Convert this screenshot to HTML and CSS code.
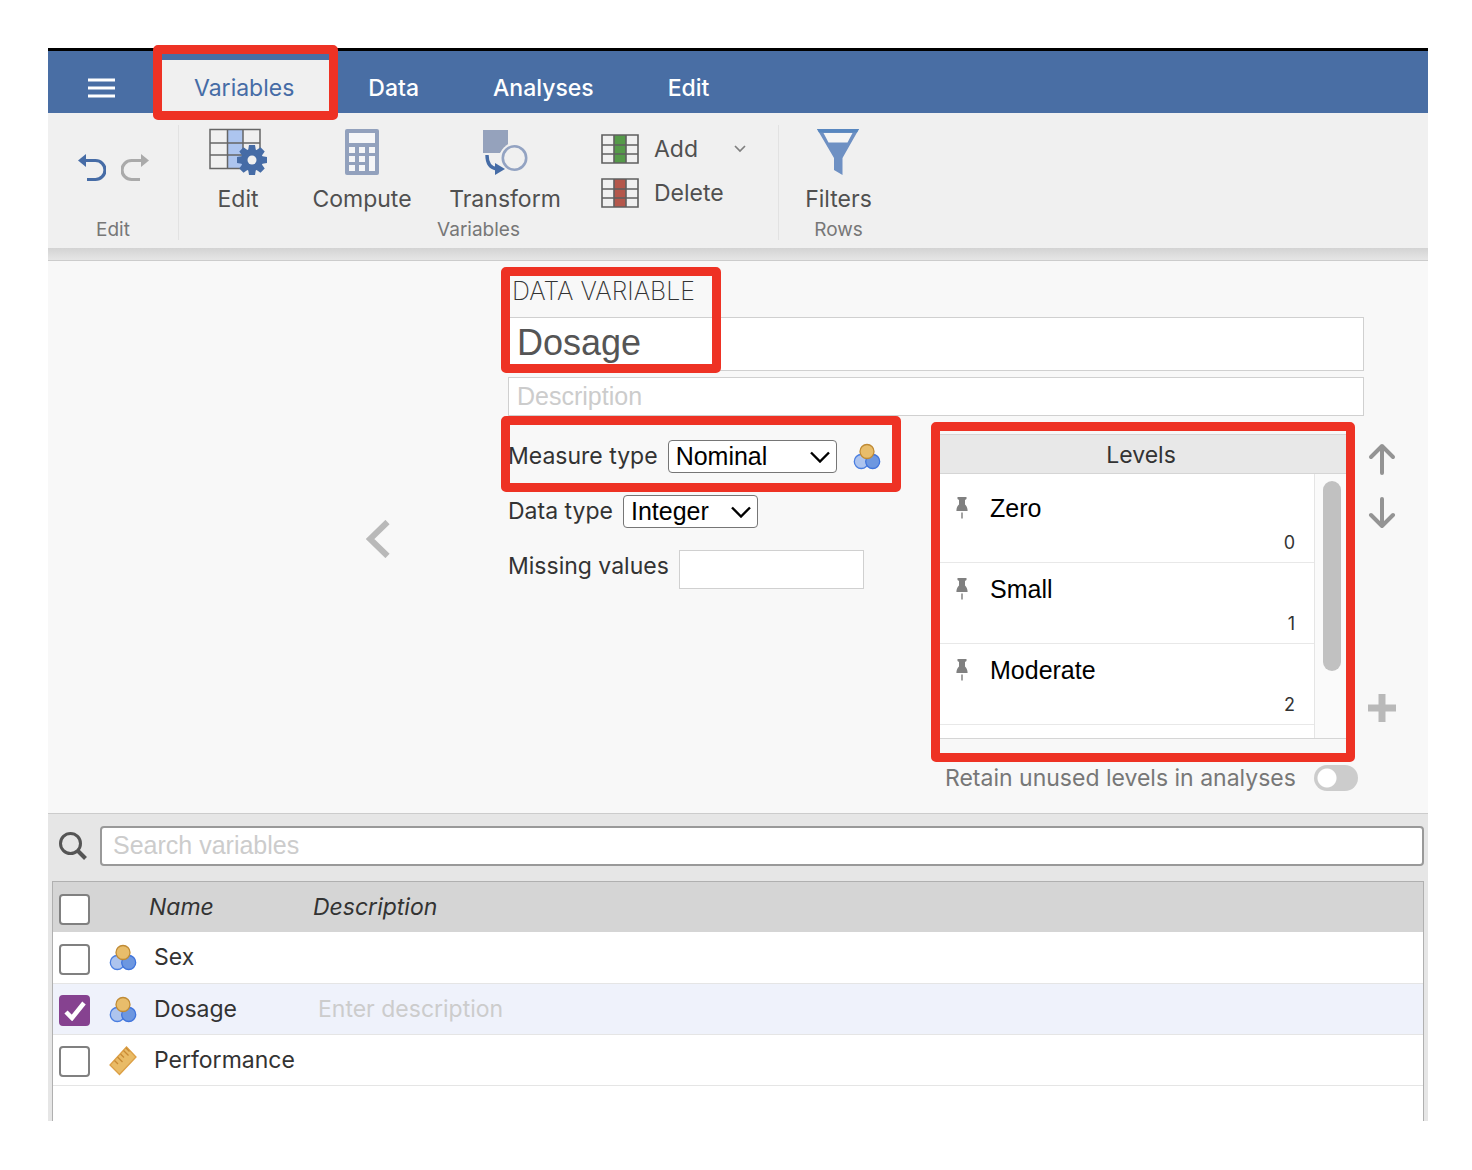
FILE: index.html
```html
<!DOCTYPE html>
<html lang="en">
<head>
<meta charset="utf-8">
<title>Variables - Dosage</title>
<link rel="stylesheet" href="styles.css">
</head>
<body>
<svg class="defs" aria-hidden="true">
  <symbol id="nominal" viewBox="0 0 28 28">
    <circle cx="8.300" cy="18.500" r="7" fill="#adc4ee" stroke="#4a7ee0" stroke-width="1.300"/>
    <circle cx="19.700" cy="18.500" r="7" fill="#6d97e0" stroke="#3f74dc" stroke-width="1.300"/>
    <circle cx="14" cy="8.500" r="7" fill="#e8bd6b" stroke="#c08b35" stroke-width="1.300"/>
  </symbol>
  <symbol id="pin" viewBox="0 0 12 22">
    <path d="M1.500 0h9v2l-1.500 1v4.500c1.600 1.500 2.600 3.500 2.600 6.500H.4c0-3 1-5 2.600-6.500V3L1.500 2z" fill="#808080"/>
    <path d="M6 15.500v6" stroke="#8c8c8c" stroke-width="1.600"/>
  </symbol>
  <symbol id="chevron" viewBox="0 0 20 12">
    <path d="M1 1.500l9 9 9-9" fill="none" stroke="#000" stroke-width="2.400"/>
  </symbol>
</svg>
<div class="app">
  <nav class="tabs">
    <button class="menu" aria-label="Menu"><svg width="27" height="20"><path d="M0 2h27M0 10h27M0 18h27" stroke="#fff" stroke-width="3"/></svg></button>
    <div class="tab-slot"><button class="tab active">Variables</button><span class="mark mark-tab"></span></div>
    <button class="tab">Data</button>
    <button class="tab">Analyses</button>
    <button class="tab">Edit</button>
  </nav>

  <div class="toolbar">
    <section class="group history">
      <div class="tools">
        <button class="tool" aria-label="Undo"><svg width="28" height="28"><path d="M6 6.500H17.500a8.300 8.300 0 0 1 0 19H9" fill="none" stroke="#466ca6" stroke-width="3.200"/><path d="M0 6.500L8 0v13z" fill="#466ca6"/></svg></button>
        <button class="tool" aria-label="Redo"><svg width="28" height="28"><path d="M22 6.500H10.500a8.300 8.300 0 0 0 0 19H19" fill="none" stroke="#aaa" stroke-width="3.200"/><path d="M28 6.500L20 0v13z" fill="#aaa"/></svg></button>
      </div>
      <div class="group-label">Edit</div>
    </section>
    <section class="group variables">
      <div class="tools">
        <button class="tool big">
          <svg width="58" height="48" viewBox="0 0 58 48"><path d="M19 2.500h15v39H19z" fill="#adc5ef"/><path d="M1 2.500h50v39H1zM1 16h50M1 28h50M18.500 2v40M34 2v40" fill="none" stroke="#666" stroke-width="1.500"/><g transform="translate(43 33)"><g fill="#466ca6"><circle r="11"/><path d="M-3-15h6l1 6h-8zM-3 15h6l1-6h-8zM-15-3v6l6 1v-8zM15-3v6l-6 1v-8z"/><path d="M-3-15h6l1 6h-8zM-3 15h6l1-6h-8zM-15-3v6l6 1v-8zM15-3v6l-6 1v-8z" transform="rotate(45)"/></g><circle r="4.500" fill="#f0f0f0"/></g></svg>
          Edit</button>
        <button class="tool big">
          <svg width="36" height="48" viewBox="0 0 36 48"><rect x="1" y="2" width="34" height="46" rx="2" fill="#92a1bd"/><path d="M5 6h26v10H5zM5 20h6v6H5zM15 20h6v6h-6zM25 20h6v6h-6zM5 29h6v6H5zM15 29h6v6h-6zM5 38h6v6H5zM15 38h6v6h-6zM25 29h6v15h-6z" fill="#f5f6f8"/></svg>
          Compute</button>
        <button class="tool big">
          <svg width="46" height="48" viewBox="0 0 46 48"><path d="M1 3h25v14l-8 9H1z" fill="#95a2bc"/><circle cx="32.500" cy="31" r="15" fill="#f0f0f0"/><circle cx="32.500" cy="31" r="11.700" fill="none" stroke="#93a3c2" stroke-width="2.600"/><path d="M5 28c0 8 3 13 10 14" fill="none" stroke="#466ca6" stroke-width="3.400"/><path d="M13 36l10 6-10 6z" fill="#466ca6"/></svg>
          Transform</button>
        <div class="small-tools">
          <button class="tool small"><svg width="38" height="30" viewBox="0 0 38 30"><path d="M13 1h12v28H13z" fill="#559a49"/><path d="M1 1h36v28H1zM1 11h36M1 20h36M13 1v28M25 1v28" fill="none" stroke="#5f5f5f" stroke-width="1.600"/></svg><span>Add</span><svg class="caret" width="12" height="8"><path d="M1 1l5 5 5-5" fill="none" stroke="#808080" stroke-width="1.700"/></svg></button>
          <button class="tool small"><svg width="38" height="30" viewBox="0 0 38 30"><path d="M13 1h12v28H13z" fill="#b4574b"/><path d="M1 1h36v28H1zM1 11h36M1 20h36M13 1v28M25 1v28" fill="none" stroke="#5f5f5f" stroke-width="1.600"/></svg><span>Delete</span></button>
        </div>
      </div>
      <div class="group-label">Variables</div>
    </section>
    <section class="group rows">
      <div class="tools">
        <button class="tool big"><svg width="42" height="48" viewBox="0 0 42 48"><path d="M0 2h42L25.500 31v17L17 43V31z" fill="#6e90c3"/><path d="M0 2h42l-2 3.500H2z" fill="#5887c0"/><path d="M6.500 6h29l-5 9.500h-19z" fill="#f5f5f5"/></svg>Filters</button>
      </div>
      <div class="group-label">Rows</div>
    </section>
  </div>
  <div class="divider"></div>

  <main class="editor">
    <button class="previous" aria-label="Previous variable"><svg width="24" height="38"><path d="M21.500 2L4 19l17.500 17" fill="none" stroke="#b9b9b9" stroke-width="6"/></svg></button>
    <div class="details">
      <div class="title-block">
        <h1 class="kind">DATA VARIABLE</h1>
        <input class="name-input" value="Dosage" aria-label="Variable name">
        <span class="mark mark-title"></span>
      </div>
      <input class="description-input" placeholder="Description" aria-label="Description">
      <div class="settings">
        <form class="types">
          <div class="field">
            <label for="measure">Measure type</label>
            <span class="pick pick-measure"><select id="measure"><option>Nominal</option></select><svg width="20" height="12"><use href="#chevron"/></svg></span>
            <svg class="type-icon" width="28" height="28"><use href="#nominal"/></svg>
            <span class="mark mark-measure"></span>
          </div>
          <div class="field">
            <label for="datatype">Data type</label>
            <span class="pick pick-data"><select id="datatype"><option>Integer</option></select><svg width="20" height="12"><use href="#chevron"/></svg></span>
          </div>
          <div class="field">
            <label for="missing">Missing values</label>
            <input class="missing-input" id="missing">
          </div>
        </form>
        <div class="levels-column">
          <section class="levels">
            <h2 class="levels-title">Levels</h2>
            <div class="levels-body">
              <ul class="level-list">
                <li class="level"><svg width="12" height="22"><use href="#pin"/></svg><span class="level-name">Zero</span><span class="level-value">0</span></li>
                <li class="level"><svg width="12" height="22"><use href="#pin"/></svg><span class="level-name">Small</span><span class="level-value">1</span></li>
                <li class="level"><svg width="12" height="22"><use href="#pin"/></svg><span class="level-name">Moderate</span><span class="level-value">2</span></li>
              </ul>
              <div class="scrollbar"><div class="thumb"></div></div>
            </div>
            <span class="mark mark-levels"></span>
          </section>
          <label class="retain">Retain unused levels in analyses<input type="checkbox" class="toggle"></label>
        </div>
        <div class="level-actions">
          <button aria-label="Move up"><svg width="28" height="32"><path d="M14 30V3M3 14L14 3l11 11" fill="none" stroke="#949494" stroke-width="4" stroke-linecap="round" stroke-linejoin="round"/></svg></button>
          <button aria-label="Move down"><svg width="28" height="32"><path d="M14 2v27M3 18l11 11 11-11" fill="none" stroke="#949494" stroke-width="4" stroke-linecap="round" stroke-linejoin="round"/></svg></button>
          <button class="add-level" aria-label="Add level"><svg width="28" height="28"><path d="M14 0v28M0 14h28" stroke="#b9b9b9" stroke-width="7"/></svg></button>
        </div>
      </div>
    </div>
  </main>

  <section class="browser">
    <div class="search">
      <svg width="28" height="28"><circle cx="11.500" cy="11.500" r="10" fill="none" stroke="#555" stroke-width="3"/><path d="M18.500 18.500l8 8" stroke="#555" stroke-width="4"/></svg>
      <input class="search-input" placeholder="Search variables" aria-label="Search variables">
    </div>
    <div class="table-frame">
      <table class="variable-table">
        <thead><tr><th class="check-cell"><input type="checkbox" class="check" aria-label="Select all"></th><th class="icon-cell"></th><th class="name-cell">Name</th><th>Description</th></tr></thead>
        <tbody>
          <tr><td class="check-cell"><input type="checkbox" class="check" aria-label="Select Sex"></td><td class="icon-cell"><svg width="28" height="28"><use href="#nominal"/></svg></td><td>Sex</td><td></td></tr>
          <tr class="selected"><td class="check-cell"><input type="checkbox" class="check" checked aria-label="Select Dosage"><svg class="tick" width="22" height="20"><path d="M2 11l6 6L20 2" fill="none" stroke="#fff" stroke-width="4.500"/></svg></td><td class="icon-cell"><svg width="28" height="28"><use href="#nominal"/></svg></td><td>Dosage</td><td class="hint">Enter description</td></tr>
          <tr><td class="check-cell"><input type="checkbox" class="check" aria-label="Select Performance"></td><td class="icon-cell"><svg width="28" height="30" viewBox="0 0 28 30"><path d="M17.500 1L27 11 10.500 28.500 1 19z" fill="#e9bb66" stroke="#dc9f45" stroke-width="1.300"/><path d="M14.500 4.500l5 5M11.500 8l3.500 3.500M8.500 11l5 5M5.500 14.500L9 18M17 2l3.500 3.500" stroke="#c98a35" stroke-width="1.300"/></svg></td><td>Performance</td><td></td></tr>
        </tbody>
      </table>
    </div>
  </section>
</div>
</body>
</html>
```
FILE: styles.css
```css
* { box-sizing: border-box; }
body {
  margin: 0;
  padding: 48px 44px 49px 48px;
  background: #fff;
  color: #333;
  font: 23px/28px Inter, "Noto Sans", sans-serif;
}
button { border: 0; padding: 0; background: none; color: inherit; font: inherit; }
input, select { margin: 0; font-family: "Liberation Sans", Arial, sans-serif; font-size: 25px; }
input::placeholder { color: #ccc; opacity: 1; }
svg { display: block; flex: none; }
.defs { position: absolute; width: 0; height: 0; }

.app {
  display: flex;
  flex-direction: column;
  min-height: calc(100vh - 97px);
  border-top: 3px solid #000;
}

/* Red call-out frames */
.mark {
  position: absolute;
  border: 9px solid #ee3224;
  border-radius: 5px;
  pointer-events: none;
  z-index: 1;
}
.mark-tab { inset: -15px -7px -7px -4px; }
.mark-title { top: -7px; left: -7px; width: 220px; height: 106px; }
.mark-measure { top: -24px; left: -7px; width: 400px; height: 76px; }
.mark-levels { inset: -13px -8px -24px -4px; }

/* Tab bar */
.tabs { display: flex; height: 62px; padding-top: 9px; background: #496ea4; color: #fff; }
.menu { display: grid; place-items: center; width: 109px; padding: 2px 3px 0 0; }
.tab-slot { position: relative; display: flex; }
.tab { padding: 2px 37px 0; font-weight: 500; }
.tab.active { background: #f0f0f0; color: #466ca6; font-weight: 400; }

/* Toolbar */
.toolbar { display: flex; height: 135px; padding: 12px 0 8px; background: #f0f0f0; color: #505050; }
.group { display: flex; flex-direction: column; }
.group + .group { border-left: 1px solid #e2e2e2; }
.history { width: 130px; }
.variables { width: 600px; }
.rows { width: 120px; }
.tools { display: flex; flex: 1; justify-content: center; }
.variables .tools { display: grid; grid-template-columns: 118px 130px 156px 1fr; }
.group-label { font-size: 19px; line-height: 20px; text-align: center; color: #777; }
.history .tools { align-items: center; gap: 15px; padding-bottom: 10px; }
.big { display: flex; flex-direction: column; align-items: center; gap: 10px; padding-top: 2px; height: 88px; }
.small-tools { display: flex; flex-direction: column; gap: 14px; padding: 9px 0 0 18px; }
.small { display: flex; align-items: center; gap: 15px; }
.caret { margin-left: 21px; }
.divider { height: 13px; border-bottom: 1px solid #ccc; background: linear-gradient(#d3d3d3, #e6e6e6); }

/* Variable editor */
.editor {
  display: grid;
  grid-template-columns: 460px 1fr;
  padding-right: 31px;
  background: #f8f8f8;
  border-bottom: 1px solid #ccc;
}
.previous { place-self: center end; margin-right: 118px; padding-top: 4px; }
.details { padding: 13px 0 21px; }
.title-block { position: relative; margin-right: 33px; }
.kind { margin: 0; padding: 2px 4px 11px; font-size: 25px; font-weight: 200; line-height: 30px; }
.name-input, .description-input, .missing-input {
  display: block;
  border: 1px solid #d0d0d0;
  padding: 0 8px;
  background: #fff;
}
.name-input { width: 100%; height: 54px; padding-bottom: 2px; font-size: 36px; color: #555; }
.description-input { width: calc(100% - 33px); height: 39px; margin-top: 6px; }
.settings { display: flex; padding-top: 18px; }
.types { display: flex; flex: 1; flex-direction: column; gap: 22px; padding-top: 6px; }
.field { position: relative; display: flex; height: 33px; }
.field label { line-height: 32px; }
.pick { display: grid; align-items: center; margin-left: 10px; }
.pick > * { grid-area: 1 / 1; }
.pick svg { justify-self: end; margin-right: 7px; pointer-events: none; }
.pick select {
  appearance: none;
  width: 100%;
  height: 33px;
  padding: 0 7px 2px;
  border: 1px solid #767676;
  border-radius: 4px;
  background: #fff;
  color: #000;
}
.pick-measure { width: 169px; }
.pick-data { width: 135px; }
.type-icon { align-self: center; margin-left: 16px; }
.missing-input { width: 185px; height: 39px; margin-left: 10px; }

.levels-column { width: 412px; }
.levels { position: relative; border-top: 1px solid #d5d5d5; border-bottom: 1px solid #d5d5d5; }
.levels-title {
  margin: 0;
  padding: 6px 0 4px;
  border-bottom: 1px solid #d5d5d5;
  background: #e8e8e8;
  font-size: 23px;
  font-weight: 400;
  text-align: center;
}
.levels-body { display: flex; background: #fff; }
.level-list { flex: 1; margin: 0; padding: 8px 0 13px; list-style: none; }
.level {
  display: grid;
  grid-template-columns: 12px 1fr auto;
  grid-template-rows: 28px 28px;
  align-items: center;
  gap: 7px 22px;
  height: 81px;
  padding: 12px 19px 0 21px;
  border-bottom: 1px solid #e8e8e8;
}
.level-name { font: 25px/28px "Liberation Sans", Arial, sans-serif; color: #000; }
.level-value { grid-area: 2 / 3; font-size: 18px; }
.scrollbar { width: 33px; padding: 7px 6px 7px 8px; border-left: 1px solid #e5e5e5; background: #fafafa; }
.thumb { height: 190px; border-radius: 9px; background: #c1c1c1; }
.retain { display: flex; align-items: center; gap: 18px; padding: 25px 0 0 10px; white-space: nowrap; color: #777; }
.toggle {
  appearance: none;
  flex: none;
  width: 44px;
  height: 26px;
  border-radius: 13px;
  background: radial-gradient(circle at 13px 13px, #fff 9px, #ccc 10px);
}
.level-actions { display: flex; flex-direction: column; gap: 22px; padding: 9px 0 0 21px; width: 50px; }
.add-level { margin-top: 143px; }

/* Variable browser */
.browser { display: flex; flex: 1; flex-direction: column; padding: 12px 4px 0; background: #e6e6e6; }
.search { display: flex; align-items: center; gap: 13px; padding-left: 7px; }
.search-input { flex: 1; min-width: 0; height: 40px; border: 2px solid #999; border-radius: 4px; padding: 0 11px 2px; background: #fff; }
.table-frame { flex: 1; margin-top: 15px; border: 1px solid #b0b0b0; border-bottom: 0; background: #fff; }
.variable-table { width: 100%; border-collapse: collapse; table-layout: fixed; }
.variable-table th { height: 50px; padding: 0; background: #d5d5d5; font-weight: 400; font-style: italic; text-align: left; }
.variable-table td { height: 51px; padding: 0 0 0 5px; border-bottom: 1px solid #e5e5e5; }
.variable-table .check-cell { position: relative; width: 51px; padding: 4px 0 0 6px; }
.variable-table .icon-cell { width: 45px; padding: 2px 0 0 5px; }
.name-cell { width: 164px; }
.selected { background: #eff2fb; }
.variable-table .hint { color: #ccc; }
.check { appearance: none; display: block; width: 31px; height: 31px; border: 2px solid #808080; border-radius: 4px; background: #fff; }
.check:checked { border-color: #864290; background: #864290; }
.tick { position: absolute; top: 17px; left: 11px; pointer-events: none; }
```
